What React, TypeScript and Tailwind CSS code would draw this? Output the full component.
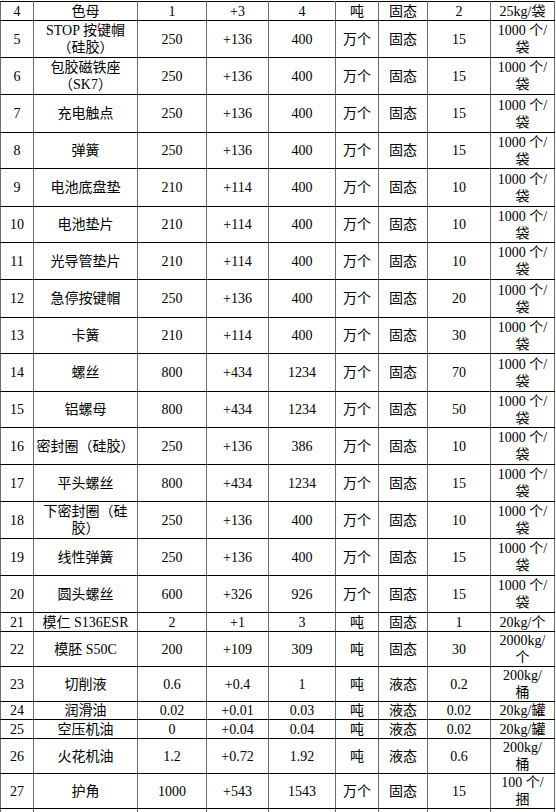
type Row = {
	no: string;
	name: string[];
	a: string;
	b: string;
	c: string;
	unit: string;
	state: string;
	d: string;
	pack: string[];
	h: string;
};

const bag = ["1000 个/", "袋"];

// h = inner height of the row (row pitch minus the 1px rule)
const rows: Row[] = [
	{ no: "4", name: ["色母"], a: "1", b: "+3", c: "4", unit: "吨", state: "固态", d: "2", pack: ["25kg/袋"], h: "h-[18px]" },
	{ no: "5", name: ["STOP 按键帽", "（硅胶）"], a: "250", b: "+136", c: "400", unit: "万个", state: "固态", d: "15", pack: bag, h: "h-[36px]" },
	{ no: "6", name: ["包胶磁铁座", "（SK7）"], a: "250", b: "+136", c: "400", unit: "万个", state: "固态", d: "15", pack: bag, h: "h-[36px]" },
	{ no: "7", name: ["充电触点"], a: "250", b: "+136", c: "400", unit: "万个", state: "固态", d: "15", pack: bag, h: "h-[37px]" },
	{ no: "8", name: ["弹簧"], a: "250", b: "+136", c: "400", unit: "万个", state: "固态", d: "15", pack: bag, h: "h-[35px]" },
	{ no: "9", name: ["电池底盘垫"], a: "210", b: "+114", c: "400", unit: "万个", state: "固态", d: "10", pack: bag, h: "h-[37px]" },
	{ no: "10", name: ["电池垫片"], a: "210", b: "+114", c: "400", unit: "万个", state: "固态", d: "10", pack: bag, h: "h-[35px]" },
	{ no: "11", name: ["光导管垫片"], a: "210", b: "+114", c: "400", unit: "万个", state: "固态", d: "10", pack: bag, h: "h-[36px]" },
	{ no: "12", name: ["急停按键帽"], a: "250", b: "+136", c: "400", unit: "万个", state: "固态", d: "20", pack: bag, h: "h-[37px]" },
	{ no: "13", name: ["卡簧"], a: "210", b: "+114", c: "400", unit: "万个", state: "固态", d: "30", pack: bag, h: "h-[35px]" },
	{ no: "14", name: ["螺丝"], a: "800", b: "+434", c: "1234", unit: "万个", state: "固态", d: "70", pack: bag, h: "h-[37px]" },
	{ no: "15", name: ["铝螺母"], a: "800", b: "+434", c: "1234", unit: "万个", state: "固态", d: "50", pack: bag, h: "h-[35px]" },
	{ no: "16", name: ["密封圈（硅胶）"], a: "250", b: "+136", c: "386", unit: "万个", state: "固态", d: "10", pack: bag, h: "h-[36px]" },
	{ no: "17", name: ["平头螺丝"], a: "800", b: "+434", c: "1234", unit: "万个", state: "固态", d: "15", pack: bag, h: "h-[36px]" },
	{ no: "18", name: ["下密封圈（硅", "胶）"], a: "250", b: "+136", c: "400", unit: "万个", state: "固态", d: "10", pack: bag, h: "h-[36px]" },
	{ no: "19", name: ["线性弹簧"], a: "250", b: "+136", c: "400", unit: "万个", state: "固态", d: "15", pack: bag, h: "h-[36px]" },
	{ no: "20", name: ["圆头螺丝"], a: "600", b: "+326", c: "926", unit: "万个", state: "固态", d: "15", pack: bag, h: "h-[36px]" },
	{ no: "21", name: ["模仁 S136ESR"], a: "2", b: "+1", c: "3", unit: "吨", state: "固态", d: "1", pack: ["20kg/个"], h: "h-[18px]" },
	{ no: "22", name: ["模胚 S50C"], a: "200", b: "+109", c: "309", unit: "吨", state: "固态", d: "30", pack: ["2000kg/", "个"], h: "h-[34px]" },
	{ no: "23", name: ["切削液"], a: "0.6", b: "+0.4", c: "1", unit: "吨", state: "液态", d: "0.2", pack: ["200kg/", "桶"], h: "h-[34px]" },
	{ no: "24", name: ["润滑油"], a: "0.02", b: "+0.01", c: "0.03", unit: "吨", state: "液态", d: "0.02", pack: ["20kg/罐"], h: "h-[17px]" },
	{ no: "25", name: ["空压机油"], a: "0", b: "+0.04", c: "0.04", unit: "吨", state: "液态", d: "0.02", pack: ["20kg/罐"], h: "h-[18px]" },
	{ no: "26", name: ["火花机油"], a: "1.2", b: "+0.72", c: "1.92", unit: "吨", state: "液态", d: "0.6", pack: ["200kg/", "桶"], h: "h-[34px]" },
	{ no: "27", name: ["护角"], a: "1000", b: "+543", c: "1543", unit: "万个", state: "固态", d: "15", pack: ["100 个/", "捆"], h: "h-[34px]" },
];

const cell = "border-x border-x-[#6b6b6b] border-y border-y-black p-0 text-center align-middle";

function Cell({ lines, h }: { lines: string[]; h: string }) {
	return (
		<td className={cell}>
			<div className={`flex flex-col items-center justify-center overflow-hidden ${h}`}>
				{lines.map((l, i) => (
					<div key={i} className="h-[17px] whitespace-nowrap leading-[17px]">
						{l}
					</div>
				))}
			</div>
		</td>
	);
}

export default function App() {
	return (
		<div className="h-[812px] overflow-hidden bg-white pt-[1px]">
			<table className="w-[554px] table-fixed border-collapse font-['Liberation_Serif','Noto_Sans_CJK_SC',serif] text-[14px] text-black">
				<colgroup>
					<col className="w-[33px]" />
					<col className="w-[104px]" />
					<col className="w-[69px]" />
					<col className="w-[62px]" />
					<col className="w-[67px]" />
					<col className="w-[43px]" />
					<col className="w-[49px]" />
					<col className="w-[63px]" />
					<col className="w-[64px]" />
				</colgroup>
				<tbody>
					{rows.map((r) => (
						<tr key={r.no}>
							<Cell lines={[r.no]} h={r.h} />
							<Cell lines={r.name} h={r.h} />
							<Cell lines={[r.a]} h={r.h} />
							<Cell lines={[r.b]} h={r.h} />
							<Cell lines={[r.c]} h={r.h} />
							<Cell lines={[r.unit]} h={r.h} />
							<Cell lines={[r.state]} h={r.h} />
							<Cell lines={[r.d]} h={r.h} />
							<Cell lines={r.pack} h={r.h} />
						</tr>
					))}
					<tr>
						{Array.from({ length: 9 }).map((_, i) => (
							<Cell key={i} lines={[]} h="h-[36px]" />
						))}
					</tr>
				</tbody>
			</table>
		</div>
	);
}
